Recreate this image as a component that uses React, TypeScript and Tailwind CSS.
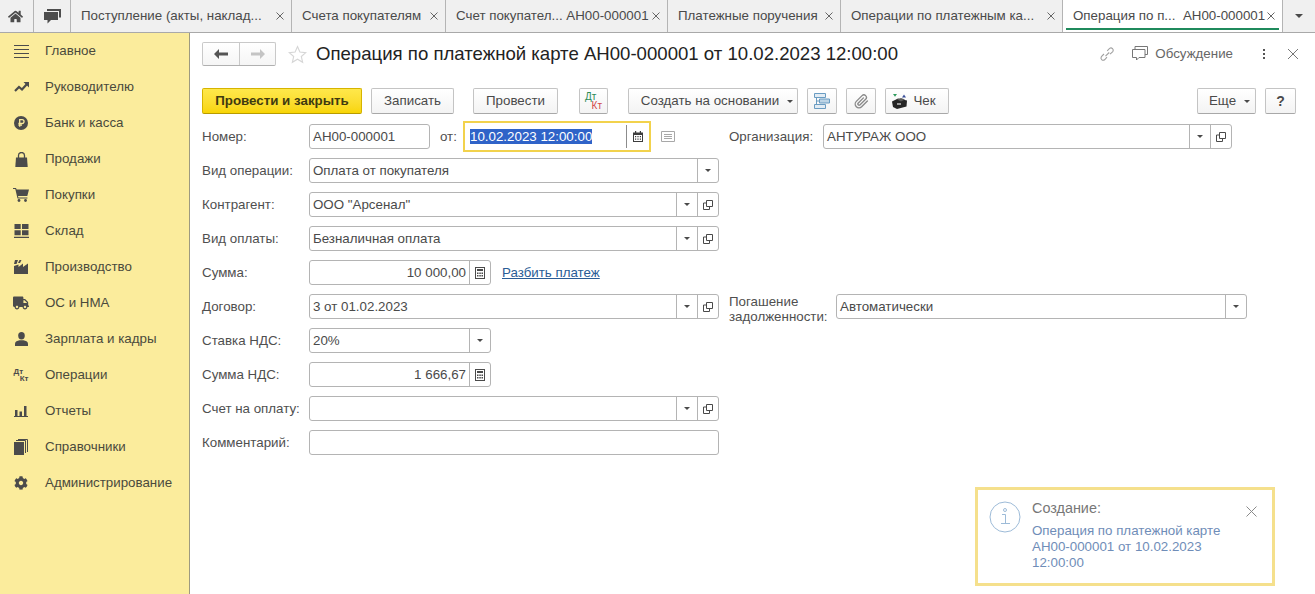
import React from 'react';
import { FaCog, FaHome, FaTruck } from 'react-icons/fa';

const GRAY = '#4b4b4b';

const tabs = [
  { title: 'Поступление (акты, наклад...', width: 'w-[221px]' },
  { title: 'Счета покупателям', width: 'w-[154px]' },
  { title: 'Счет покупател... АН00-000001', width: 'w-[222px]' },
  { title: 'Платежные поручения', width: 'w-[173px]' },
  { title: 'Операции по платежным ка...', width: 'w-[222px]' },
];

const MenuLines = () => (
  <svg width="15" height="14" viewBox="0 0 15 14" stroke={GRAY} strokeWidth="1">
    <path d="M0 1.5h15M0 5.5h15M0 9.5h15M0 13.5h15" />
  </svg>
);

const TrendIcon = () => (
  <svg width="15" height="10" viewBox="0 0 15 10">
    <path d="M1 9l4-4 3 2.500 5-5.500" fill="none" stroke={GRAY} strokeWidth="2.200" />
    <path d="M9.500 0H15v5.500z" fill={GRAY} />
  </svg>
);

const RubleIcon = () => (
  <svg width="14" height="14" viewBox="0 0 14 14">
    <circle cx="7" cy="7" r="7" fill={GRAY} />
    <path d="M5.700 10.800V3.600h2.400a1.900 1.900 0 0 1 0 3.900H4.400M4.400 9.200h3.600" fill="none" stroke="#fbec9c" strokeWidth="1.300" />
  </svg>
);

const BagIcon = () => (
  <svg width="13" height="15" viewBox="0 0 13 15" fill={GRAY}>
    <path d="M1 5.500h11l.7 9.500H.3z" />
    <path d="M3.500 6V3.500a3 3 0 0 1 6 0V6" fill="none" stroke={GRAY} strokeWidth="1.300" />
  </svg>
);

const CartIcon = () => (
  <svg width="16" height="14" viewBox="0 0 16 14" fill={GRAY}>
    <path d="M0 0h3l.6 1.500H16l-1.700 6.500H5l.4 1.500h9v1H4.500L2.300 1H0z" />
    <circle cx="6" cy="12.500" r="1.400" />
    <circle cx="12.500" cy="12.500" r="1.400" />
  </svg>
);

const WarehouseIcon = () => (
  <svg width="15" height="14" viewBox="0 0 15 14" fill={GRAY}>
    <path d="M0.500 0h6.200v5H0.500zM8 0h6.500v5H8zM0.500 6.200h6.200v5H0.500zM8 6.200h6.500v5H8zM0 12.700h15V14H0z" />
  </svg>
);

const FactoryIcon = () => (
  <svg width="14" height="14" viewBox="0 0 14 14" fill={GRAY}>
    <path d="M1 0h3L2.500 4H0z" />
    <path d="M5.500 0h2L6 3H4z" />
    <path d="M0 14V6l4.500-1.500V7L9 3.500V7l5-3.500V14z" />
  </svg>
);

const UserIcon = () => (
  <svg width="13" height="14" viewBox="0 0 13 14" fill={GRAY}>
    <ellipse cx="6.500" cy="3.700" rx="3.300" ry="3.700" />
    <path d="M0 14v-2.500c0-1.800 2.500-3 4.500-3.300h4c2 .3 4.500 1.500 4.500 3.300V14z" />
  </svg>
);

const BarsIcon = () => (
  <svg width="14" height="11" viewBox="0 0 14 11" fill={GRAY}>
    <path d="M1 4h2.500v6H1zM5.500 5.500H8V10H5.500zM10 0h2.500v10H10zM0 10h14v1H0z" />
  </svg>
);

const StackIcon = () => (
  <svg width="14" height="16" viewBox="0 0 14 16" fill={GRAY}>
    <path d="M0 3h10v13H0z" />
    <path d="M2 1.500h9.500V14M4 .5h9.500V13" fill="none" stroke={GRAY} strokeWidth="1" />
  </svg>
);

const DtKtSmall = () => (
  <span className="block w-[15px] text-[8px] font-bold leading-[7px] text-[#4b4b4b]">
    <span className="block text-left">Дт</span>
    <span className="block text-right">Кт</span>
  </span>
);

const menu: { label: string; icon: React.ReactNode }[] = [
  { label: 'Главное', icon: <MenuLines /> },
  { label: 'Руководителю', icon: <TrendIcon /> },
  { label: 'Банк и касса', icon: <RubleIcon /> },
  { label: 'Продажи', icon: <BagIcon /> },
  { label: 'Покупки', icon: <CartIcon /> },
  { label: 'Склад', icon: <WarehouseIcon /> },
  { label: 'Производство', icon: <FactoryIcon /> },
  { label: 'ОС и НМА', icon: <FaTruck size={16} color={GRAY} /> },
  { label: 'Зарплата и кадры', icon: <UserIcon /> },
  { label: 'Операции', icon: <DtKtSmall /> },
  { label: 'Отчеты', icon: <BarsIcon /> },
  { label: 'Справочники', icon: <StackIcon /> },
  { label: 'Администрирование', icon: <FaCog size={14} color={GRAY} /> },
];

const ChatFilled = () => (
  <svg width="17" height="15" viewBox="0 0 17 15" fill="#4d4d4d">
    <path d="M3 0h14v8.500h-2V2H3z" />
    <path d="M0 3h14v8H7l-3.500 3.500V11H0z" />
  </svg>
);

const TabClose = () => (
  <svg className="shrink-0" width="8" height="8" viewBox="0 0 8 8" stroke="#666">
    <path d="M.5.5l7 7M7.500.5l-7 7" />
  </svg>
);

const ArrowLeft = ({ color }: { color: string }) => (
  <svg width="14" height="10" viewBox="0 0 14 10" fill={color}>
    <path d="M0 5l5-5v3.400h9v3.200H5V10z" />
  </svg>
);

const ArrowRight = ({ color }: { color: string }) => (
  <svg width="14" height="10" viewBox="0 0 14 10" fill={color}>
    <path d="M14 5L9 0v3.400H0v3.200h9V10z" />
  </svg>
);

const Caret = ({ className = '' }: { className?: string }) => (
  <span className={`block w-0 h-0 border-x-[3px] border-x-transparent border-t-[3px] border-t-[#4a4a4a] ${className}`} />
);

const CalcIcon = () => (
  <svg width="10" height="12" viewBox="0 0 10 12" fill="#4a4a4a">
    <path d="M0 0h10v12H0zM1 1v10h8V1z" fillRule="evenodd" />
    <path d="M2 2h6v2H2zM2 5.500h1.500V7H2zM4.300 5.500h1.500V7H4.300zM6.500 5.500H8V7H6.500zM2 8h1.500v1.500H2zM4.300 8h1.500v1.500H4.300zM6.500 8H8v1.500H6.500z" />
  </svg>
);

const CalendarIcon = () => (
  <svg width="10" height="11" viewBox="0 0 10 11" fill="#3d3d3d">
    <path d="M0 1.500h10V11H0zM1 4v6h8V4z" fillRule="evenodd" />
    <path d="M2 0h1.200v2.500H2zM6.800 0H8v2.500H6.800zM2 5h1.200v1.200H2zM4.400 5h1.200v1.200H4.400zM6.800 5H8v1.200H6.800zM2 7.500h1.200v1.200H2zM4.400 7.500h1.200v1.200H4.400zM6.800 7.500H8v1.200H6.800z" />
  </svg>
);

const OpenIcon = () => (
  <svg width="10" height="10" viewBox="0 0 10 10" fill="none" stroke="#4a4a4a">
    <path d="M3.500.5h6v6h-6z" />
    <path d="M3.500 3H.5v6.500h6V6.500" />
  </svg>
);

const Label = ({ children }: { children: React.ReactNode }) => (
  <span className="w-[107px] shrink-0 text-[#4f4f4f] whitespace-nowrap">{children}</span>
);

type FieldProps = {
  value?: string;
  width: string;
  right?: boolean;
  caret?: boolean;
  open?: boolean;
  calc?: boolean;
};

const Field = ({ value, width, right, caret, open, calc }: FieldProps) => (
  <div className={`${width} h-[25px] shrink-0 flex rounded-[3px] border border-[#b4b4b4] bg-white text-[#4a4a4a]`}>
    <span className={`flex-1 px-[3px] leading-[23px] whitespace-nowrap ${right ? 'text-right' : ''}`}>{value}</span>
    {calc && (
      <span className="w-[21px] border-l border-[#b4b4b4] flex items-center justify-center">
        <CalcIcon />
      </span>
    )}
    {caret && (
      <span className="w-[21px] border-l border-[#b4b4b4] flex items-center justify-center">
        <Caret />
      </span>
    )}
    {open && (
      <span className="w-[21px] border-l border-[#b4b4b4] flex items-center justify-center">
        <OpenIcon />
      </span>
    )}
  </div>
);

const Button = ({ children, className }: { children: React.ReactNode; className: string }) => (
  <button className={`h-[26px] shrink-0 flex items-center justify-center rounded-[2px] border border-[#c4c4c4] border-b-[#a8a8a8] bg-gradient-to-b from-white to-[#f3f3f3] text-[#4a4a4a] ${className}`}>
    {children}
  </button>
);

export default function App() {
  return (
    <div className="relative w-[1315px] h-[594px] overflow-hidden bg-white text-[13.33px] font-['Liberation_Sans',Arial,sans-serif]">
      {/* tabs */}
      <div className="h-[33px] flex bg-[#f0f0f0] border-b border-[#a9a9a9] text-[#4a4a4a]">
        <div className="w-[34px] pr-[3px] flex items-center justify-center border-r border-[#b4b4b4]">
          <FaHome size={15} color="#4d4d4d" />
        </div>
        <div className="w-[37px] flex items-center justify-center border-r border-[#b4b4b4]">
          <ChatFilled />
        </div>
        {tabs.map((t) => (
          <div key={t.title} className={`${t.width} shrink-0 flex items-center justify-between pl-[10px] pr-[7px] border-r border-[#b4b4b4] whitespace-nowrap`}>
            <span>{t.title}</span>
            <TabClose />
          </div>
        ))}
        <div className="w-[220px] shrink-0 relative flex items-center justify-between pl-[10px] pr-[7px] bg-white border-r border-[#b4b4b4] whitespace-nowrap">
          <span>Операция по п...&nbsp; АН00-000001</span>
          <TabClose />
          <span className="absolute left-[3px] right-[3px] bottom-[2px] h-[2px] bg-[#1f8a5c]" />
        </div>
        <div className="flex-1 flex items-center justify-center">
          <span className="block w-0 h-0 border-x-[4px] border-x-transparent border-t-[4px] border-t-[#4a4a4a]" />
        </div>
      </div>

      <div className="flex h-[561px]">
        {/* sidebar */}
        <nav className="w-[190px] shrink-0 bg-[#fbec9c] border-r border-[#9d9a80] text-[#4a4a3c]">
          {menu.map((m) => (
            <div key={m.label} className="h-9 flex items-center">
              <span className="w-[45px] shrink-0 flex items-center justify-center pr-[3px]">{m.icon}</span>
              <span>{m.label}</span>
            </div>
          ))}
        </nav>

        {/* form */}
        <main className="flex-1 min-w-0 pl-[12px] pr-[19px] pt-[9px]">
          <div className="h-[24px] flex items-center">
            <div className="w-[74px] h-[24px] flex rounded-[2px] border border-[#c9c9c9] border-b-[#b0b0b0] bg-gradient-to-b from-white to-[#f5f5f5]">
              <span className="w-[37px] flex items-center justify-center border-r border-[#c9c9c9]">
                <ArrowLeft color="#555" />
              </span>
              <span className="flex-1 flex items-center justify-center">
                <ArrowRight color="#c4c4c4" />
              </span>
            </div>
            <svg className="ml-[12px]" width="19" height="19" viewBox="0 0 24 24" fill="none" stroke="#d6d6d6" strokeWidth="1.400">
              <path d="M12 2l3 6.900 7.400.7-5.600 4.900 1.700 7.300L12 18l-6.500 3.800 1.700-7.300L1.600 9.600 9 8.900z" />
            </svg>
            <h1 className="ml-[9px] text-[18.6px] font-normal leading-none text-[#222] whitespace-nowrap">
              Операция по платежной карте АН00-000001 от 10.02.2023 12:00:00
            </h1>
            <div className="ml-auto -mr-[2px] flex items-center text-[#666]">
              <svg width="16" height="16" viewBox="0 0 16 16" fill="none" stroke="#a0a0a0" strokeWidth="1.100">
                <path d="M6.500 10.200l3.700-3.700M5 8l-2.600 2.600a2.300 2.300 0 0 0 3.200 3.200L8 11.200M8.200 4.800l2.400-2.400a2.300 2.300 0 0 1 3.200 3.200L11 8.200" />
              </svg>
              <svg className="ml-[17px]" width="16" height="15" viewBox="0 0 16 15" fill="none" stroke="#777">
                <path d="M3 3V.5h12.500v8H13" />
                <path d="M.5 3.500h12.500v8H7L4.500 14v-2.500H.5z" />
              </svg>
              <span className="ml-[7px]">Обсуждение</span>
              <span className="ml-[30px] flex flex-col gap-[2px]">
                <span className="w-[2px] h-[2px] bg-[#555]" />
                <span className="w-[2px] h-[2px] bg-[#555]" />
                <span className="w-[2px] h-[2px] bg-[#555]" />
              </span>
              <svg className="ml-[23px]" width="10" height="10" viewBox="0 0 10 10" stroke="#777" strokeWidth="1">
                <path d="M0 0l10 10M10 0L0 10" />
              </svg>
            </div>
          </div>

          {/* toolbar */}
          <div className="mt-[22px] flex items-center">
            <button className="w-[160px] h-[26px] rounded-[2px] border border-[#d6b400] border-b-[#b89b00] bg-gradient-to-b from-[#ffe84a] to-[#f8d500] font-bold text-[#3f3a10]">
              Провести и закрыть
            </button>
            <Button className="w-[83px] ml-[9px]">Записать</Button>
            <Button className="w-[85px] ml-[19px]">Провести</Button>
            <Button className="w-[29px] ml-[21px]">
              <span className="block w-[17px] text-[10px] leading-[9px]">
                <span className="block text-left text-[#2e8b57]">Дт</span>
                <span className="block text-right text-[#d24a4a]">Кт</span>
              </span>
            </Button>
            <Button className="w-[170px] ml-[20px] pl-[8px]">
              Создать на основании <Caret className="ml-[8px]" />
            </Button>
            <Button className="w-[30px] ml-[9px]">
              <svg width="16" height="16" viewBox="0 0 16 16" fill="none" stroke="#6a9cc2">
                <path d="M.5.5h11v4H.5z" fill="#e2ecf4" />
                <path d="M5.500 6h10v4h-10z" fill="#bcd4e6" />
                <path d="M.5 11.500h11v4H.5z" fill="#e2ecf4" />
                <path d="M2.500 4.500v7M2.500 8h3" />
              </svg>
            </Button>
            <Button className="w-[30px] ml-[9px]">
              <svg width="15" height="15" viewBox="0 0 24 24" fill="none" stroke="#8a8a8a" strokeWidth="2.200" strokeLinecap="round">
                <path d="M21.400 11.100l-9.200 9.200a6 6 0 0 1-8.500-8.500l9.200-9.200a4 4 0 0 1 5.700 5.700l-9.200 9.200a2 2 0 0 1-2.800-2.800l8.500-8.500" />
              </svg>
            </Button>
            <Button className="w-[64px] ml-[9px] pr-[6px]">
              <svg className="mr-[5px]" width="16" height="15" viewBox="0 0 16 15">
                <path d="M0 7.500l6-3 9 2-.5 6L5 15 1 13z" fill="#262626" />
                <path d="M5 5.500l4-1.500 4 1.500-4 2z" fill="#5a5a5a" />
                <path d="M1 0h4L3 2.800z" fill="#2e9b5c" />
                <path d="M10 3.500L12 .5l2 3z" fill="#3a4f9a" />
                <path d="M5 9h4v2H5z" fill="#9a9a9a" />
              </svg>
              Чек
            </Button>
            <Button className="w-[59px] ml-auto pl-[6px]">
              Еще <Caret className="ml-[8px]" />
            </Button>
            <Button className="w-[31px] ml-[9px] font-bold text-[14px]">?</Button>
          </div>

          {/* fields */}
          <div className="mt-[10px] flex flex-col gap-[9px] w-[1045px]">
            <div className="flex items-center">
              <Label>Номер:</Label>
              <Field value="АН00-000001" width="w-[121px]" />
              <span className="ml-[10px] w-[23px] shrink-0 text-[#4f4f4f]">от:</span>
              <div className="-my-[3px] w-[188px] h-[31px] shrink-0 flex items-center border-2 border-[#f2d24c] bg-white text-[#222]">
                <span className="ml-[5px] bg-[#2f63c8] text-white leading-[15px] whitespace-nowrap">10.02.2023 12:00:00</span>
                <span className="ml-auto w-[23px] h-[23px] border-l border-[#8c8c8c] flex items-center justify-center">
                  <CalendarIcon />
                </span>
              </div>
              <svg className="ml-[10px]" width="14" height="11" viewBox="0 0 14 11" fill="none" stroke="#a8a8a8">
                <path d="M.5.5h13v10H.5zM3 3.500h8M3 5.500h8M3 7.500h8" />
              </svg>
              <span className="ml-[54px] w-[94px] shrink-0 text-[#4f4f4f]">Организация:</span>
              <Field value="АНТУРАЖ ООО" width="w-[409px]" caret open />
            </div>
            <div className="flex items-center">
              <Label>Вид операции:</Label>
              <Field value="Оплата от покупателя" width="w-[410px]" caret />
            </div>
            <div className="flex items-center">
              <Label>Контрагент:</Label>
              <Field value={'ООО "Арсенал"'} width="w-[410px]" caret open />
            </div>
            <div className="flex items-center">
              <Label>Вид оплаты:</Label>
              <Field value="Безналичная оплата" width="w-[410px]" caret open />
            </div>
            <div className="flex items-center">
              <Label>Сумма:</Label>
              <Field value="10 000,00" width="w-[182px]" right calc />
              <a className="ml-[11px] text-[#2a5c96] underline">Разбить платеж</a>
            </div>
            <div className="flex items-center">
              <Label>Договор:</Label>
              <Field value="3 от 01.02.2023" width="w-[410px]" caret open />
              <span className="ml-[10px] w-[107px] h-[25px] shrink-0 flex items-center leading-[15px] text-[#4f4f4f]">
                <span className="mt-[4px]">
                  Погашение
                  <br />
                  задолженности:
                </span>
              </span>
              <Field value="Автоматически" width="w-[411px]" caret />
            </div>
            <div className="flex items-center">
              <Label>Ставка НДС:</Label>
              <Field value="20%" width="w-[182px]" caret />
            </div>
            <div className="flex items-center">
              <Label>Сумма НДС:</Label>
              <Field value="1 666,67" width="w-[182px]" right calc />
            </div>
            <div className="flex items-center">
              <Label>Счет на оплату:</Label>
              <Field width="w-[410px]" caret open />
            </div>
            <div className="flex items-center">
              <Label>Комментарий:</Label>
              <Field width="w-[410px]" />
            </div>
          </div>
        </main>
      </div>

      {/* notification */}
      <div className="absolute left-[975px] top-[487px] w-[300px] h-[99px] border-[3px] border-[#f5e08c] bg-white">
        <svg className="absolute left-[11px] top-[11px]" width="32" height="32" viewBox="0 0 32 32" fill="none" stroke="#9dbbd8">
          <circle cx="16" cy="16" r="15" />
          <circle cx="16" cy="9" r="1.500" />
          <path d="M13 13.500h3.500v9M12 22.500h9" />
        </svg>
        <div className="absolute left-[54px] top-[9px] text-[14.4px] leading-[18px] text-[#777]">Создание:</div>
        <div className="absolute left-[54px] top-[33px] w-[210px] text-[#6f8db8] leading-[16px]">
          Операция по платежной карте АН00-000001 от 10.02.2023 12:00:00
        </div>
        <svg className="absolute left-[268px] top-[16px]" width="11" height="11" viewBox="0 0 11 11" stroke="#8a8a8a">
          <path d="M.5.5l10 10M10.500.5l-10 10" />
        </svg>
      </div>
    </div>
  );
}
